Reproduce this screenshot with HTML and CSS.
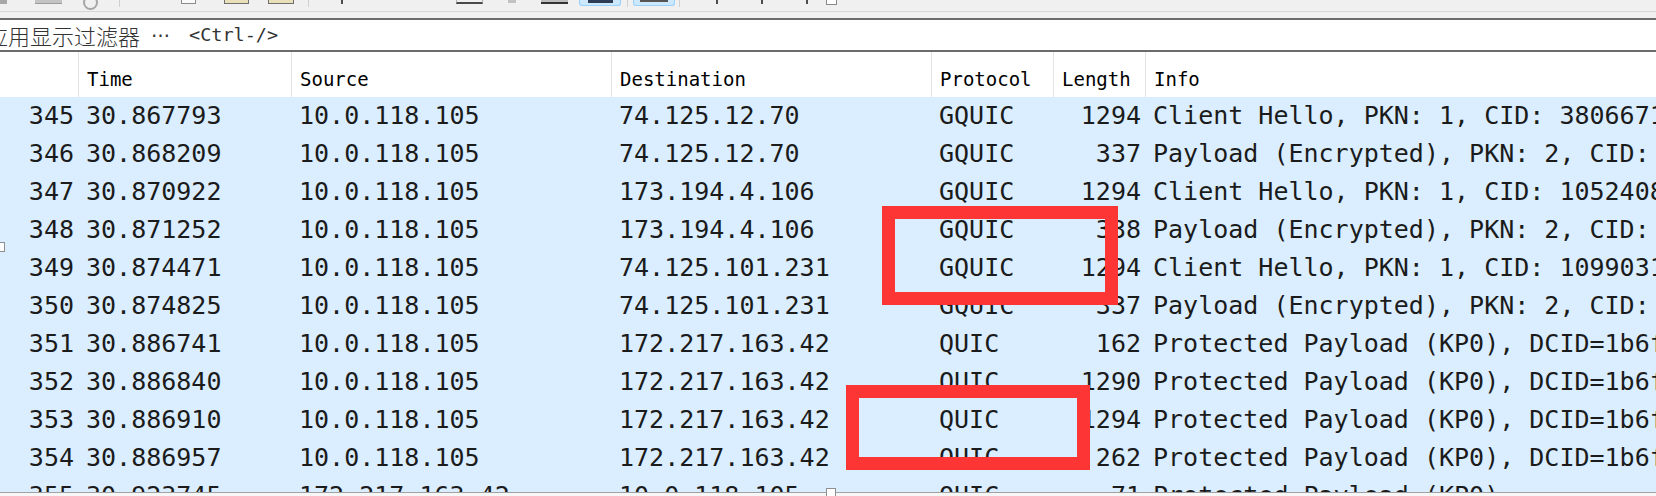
FILE: index.html
```html
<!DOCTYPE html>
<html lang="zh-CN">
<head>
<meta charset="utf-8">
<title>Wireshark packet list</title>
<link rel="stylesheet" href="styles.css">
</head>
<body>
<div class="app">
  <div class="toolbar">
    <span class="tb tb-a"></span>
    <span class="tb tb-gray"></span>
    <span class="tb tb-circle"></span>
    <span class="tb tb-sep s1"></span>
    <span class="tb tb-outline"></span>
    <span class="tb tb-beige b1"></span>
    <span class="tb tb-beige b2"></span>
    <span class="tb tb-sep s2"></span>
    <span class="tb tb-tick t1"></span>
    <span class="tb tb-darkline"></span>
    <span class="tb tb-small"></span>
    <span class="tb tb-darkbar"></span>
    <span class="tb tb-hl h1"><span class="hl-in"></span></span>
    <span class="tb tb-sep s3"></span>
    <span class="tb tb-hl h2"><span class="hl-in thin"></span></span>
    <span class="tb tb-sep s4"></span>
    <span class="tb tb-tick t2"></span>
    <span class="tb tb-tick t3"></span>
    <span class="tb tb-tick t4"></span>
    <span class="tb tb-box"></span>
  </div>
  <div class="tb-gap"></div>
  <div class="filter">
    <span class="ph-cjk">应用显示过滤器</span><span class="ph-dots">…</span><span class="ph-key">&lt;Ctrl-/&gt;</span>
  </div>
  <div class="cols head">
    <div class="hc"></div>
    <div class="hc">Time</div>
    <div class="hc">Source</div>
    <div class="hc">Destination</div>
    <div class="hc">Protocol</div>
    <div class="hc">Length</div>
    <div class="hc last">Info</div>
  </div>
  <div class="list">
    <div class="cols row"><div class="c r">345</div><div class="c">30.867793</div><div class="c">10.0.118.105</div><div class="c">74.125.12.70</div><div class="c">GQUIC</div><div class="c r">1294</div><div class="c">Client Hello, PKN: 1, CID: 3806671234567</div></div>
    <div class="cols row"><div class="c r">346</div><div class="c">30.868209</div><div class="c">10.0.118.105</div><div class="c">74.125.12.70</div><div class="c">GQUIC</div><div class="c r">337</div><div class="c">Payload (Encrypted), PKN: 2, CID: 380667123</div></div>
    <div class="cols row"><div class="c r">347</div><div class="c">30.870922</div><div class="c">10.0.118.105</div><div class="c">173.194.4.106</div><div class="c">GQUIC</div><div class="c r">1294</div><div class="c">Client Hello, PKN: 1, CID: 1052408812345</div></div>
    <div class="cols row"><div class="c r">348</div><div class="c">30.871252</div><div class="c">10.0.118.105</div><div class="c">173.194.4.106</div><div class="c">GQUIC</div><div class="c r">338</div><div class="c">Payload (Encrypted), PKN: 2, CID: 105240881</div></div>
    <div class="cols row"><div class="c r">349</div><div class="c">30.874471</div><div class="c">10.0.118.105</div><div class="c">74.125.101.231</div><div class="c">GQUIC</div><div class="c r">1294</div><div class="c">Client Hello, PKN: 1, CID: 1099031234567</div></div>
    <div class="cols row"><div class="c r">350</div><div class="c">30.874825</div><div class="c">10.0.118.105</div><div class="c">74.125.101.231</div><div class="c">GQUIC</div><div class="c r">337</div><div class="c">Payload (Encrypted), PKN: 2, CID: 109903123</div></div>
    <div class="cols row"><div class="c r">351</div><div class="c">30.886741</div><div class="c">10.0.118.105</div><div class="c">172.217.163.42</div><div class="c">QUIC</div><div class="c r">162</div><div class="c">Protected Payload (KP0), DCID=1b6f4a2c</div></div>
    <div class="cols row"><div class="c r">352</div><div class="c">30.886840</div><div class="c">10.0.118.105</div><div class="c">172.217.163.42</div><div class="c">QUIC</div><div class="c r">1290</div><div class="c">Protected Payload (KP0), DCID=1b6f4a2c</div></div>
    <div class="cols row"><div class="c r">353</div><div class="c">30.886910</div><div class="c">10.0.118.105</div><div class="c">172.217.163.42</div><div class="c">QUIC</div><div class="c r">1294</div><div class="c">Protected Payload (KP0), DCID=1b6f4a2c</div></div>
    <div class="cols row"><div class="c r">354</div><div class="c">30.886957</div><div class="c">10.0.118.105</div><div class="c">172.217.163.42</div><div class="c">QUIC</div><div class="c r">262</div><div class="c">Protected Payload (KP0), DCID=1b6f4a2c</div></div>
    <div class="cols row"><div class="c r">355</div><div class="c">30.923745</div><div class="c">172.217.163.42</div><div class="c">10.0.118.105</div><div class="c">QUIC</div><div class="c r">71</div><div class="c">Protected Payload (KP0)</div></div>
  </div>
  <div class="splitter"></div>
</div>
<div class="mark mark-1"></div>
<div class="mark mark-2"></div>
<div class="handle handle-left"></div>
<div class="handle handle-bottom"></div>
</body>
</html>
```

FILE: styles.css
```css
html, body {
  margin: 0;
  padding: 0;
}
body {
  width: 1656px;
  height: 496px;
  overflow: hidden;
  background: #f0f0f0;
  position: relative;
}
.app {
  display: flex;
  flex-direction: column;
  width: 1656px;
  height: 496px;
}

/* toolbar (only the bottom of the icons is visible) */
.toolbar {
  height: 11px;
  display: flex;
  align-items: flex-start;
  background: #f0f0f0;
  border-bottom: 1px solid #d6d6d6;
  overflow: hidden;
  flex: none;
}
.tb { display: block; flex: none; }
.tb-a { width: 7px; height: 4px; background: #a8a8a8; }
.tb-gray { margin-left: 28px; width: 27px; height: 3px; background: #c4c4c4; border-bottom: 1px solid #9c9c9c; }
.tb-circle { margin-left: 21px; width: 11px; height: 11px; margin-top: -5px; border: 2px solid #a6a6a6; border-radius: 50%; }
.tb-sep { width: 1px; height: 7px; background: #cfcfcf; }
.s1 { margin-left: 21px; }
.tb-outline { margin-left: 61px; width: 13px; height: 3px; border: 1px solid #8c8c8c; border-top: none; background: #fafafa; }
.tb-beige { width: 23px; height: 3px; background: #e9dfb8; border: 1px solid #6f6f6f; border-top: none; }
.b1 { margin-left: 28px; }
.b2 { margin-left: 19px; width: 24px; }
.s2 { margin-left: 14px; }
.tb-tick { width: 2px; height: 4px; background: #4d4d4d; }
.t1 { margin-left: 32px; }
.tb-darkline { margin-left: 113px; width: 25px; height: 2px; border: 1px solid #b0b0b0; border-top: none; border-bottom: 2px solid #4a4a4a; }
.tb-small { margin-left: 25px; width: 8px; height: 3px; background: #c2c2c2; }
.tb-darkbar { margin-left: 25px; width: 27px; height: 2px; background: #bdbdbd; border-bottom: 2px solid #333; }
.tb-hl {
  width: 40px;
  height: 5px;
  background: #cce8ff;
  border: 1px solid #99d1ff;
  border-top: none;
  border-radius: 0 0 3px 3px;
  display: flex;
  justify-content: center;
  align-items: flex-start;
}
.h1 { margin-left: 11px; }
.h2 { margin-left: 5px; }
.hl-in { width: 25px; height: 3px; background: #2e3c55; }
.hl-in.thin { height: 2px; width: 28px; background: #555; }
.s3 { margin-left: 6px; }
.s4 { margin-left: 4px; }
.t2 { margin-left: 36px; }
.t3 { margin-left: 43px; }
.t4 { margin-left: 43px; }
.tb-box { margin-left: 18px; width: 9px; height: 4px; border: 1px solid #8a8a8a; border-top: none; background: #fff; }

.tb-gap { height: 6px; background: #f0f0f0; flex: none; }

/* display filter */
.filter {
  flex: none;
  height: 30px;
  background: #ffffff;
  border-top: 2px solid #6b6b6b;
  border-bottom: 2px solid #6b6b6b;
  display: flex;
  align-items: center;
  white-space: nowrap;
  overflow: hidden;
  color: #333333;
}
.ph-cjk {
  margin-left: -14px;
  font-family: "Noto Sans CJK SC", "Noto Sans", sans-serif;
  font-size: 22px;
  font-weight: 300;
  line-height: 30px;
}
.ph-dots {
  margin-left: 11px;
  padding-bottom: 11px;
  font-family: "DejaVu Sans", sans-serif;
  font-size: 19px;
  line-height: 30px;
}
.ph-key {
  margin-left: 19px;
  font-family: "DejaVu Sans Mono", "Liberation Mono", monospace;
  font-size: 18.5px;
  line-height: 30px;
}

/* columns */
.cols {
  display: grid;
  grid-template-columns: 79px 213px 320px 320px 122px 92px 1fr;
}
.head {
  flex: none;
  height: 45px;
  background: #ffffff;
}
.hc {
  box-sizing: border-box;
  border-right: 1px solid #e3e3e3;
  padding: 9px 0 0 8px;
  font-family: "DejaVu Sans Mono", "Liberation Mono", monospace;
  font-size: 19px;
  line-height: 36px;
  color: #000;
  white-space: nowrap;
  overflow: hidden;
}
.hc.last { border-right: none; }

.list {
  flex: none;
  height: 395px;
  overflow: hidden;
  background: #daeeff;
}
.row {
  height: 38px;
  background: #daeeff;
}
.c {
  padding: 0 5px 0 7px;
  font-family: "DejaVu Sans Mono", "Liberation Mono", monospace;
  font-size: 25px;
  line-height: 38px;
  color: #1b1b1b;
  white-space: nowrap;
  overflow: hidden;
}
.c.r { text-align: right; }

.splitter {
  flex: none;
  height: 3px;
  border-top: 1px solid #a2a2a2;
  background: #f7f7f7;
}

/* annotation overlays */
.mark {
  position: absolute;
  box-sizing: border-box;
  border: 13px solid #fd3535;
}
.mark-1 { left: 882px; top: 206px; width: 236px; height: 99px; }
.mark-2 { left: 846px; top: 385px; width: 244px; height: 85px; }

.handle {
  position: absolute;
  box-sizing: border-box;
  width: 10px;
  height: 10px;
  background: #fff;
  border: 1px solid #8f8f8f;
}
.handle-left { left: -5px; top: 242px; }
.handle-bottom { left: 826px; top: 488px; height: 9px; }
```
